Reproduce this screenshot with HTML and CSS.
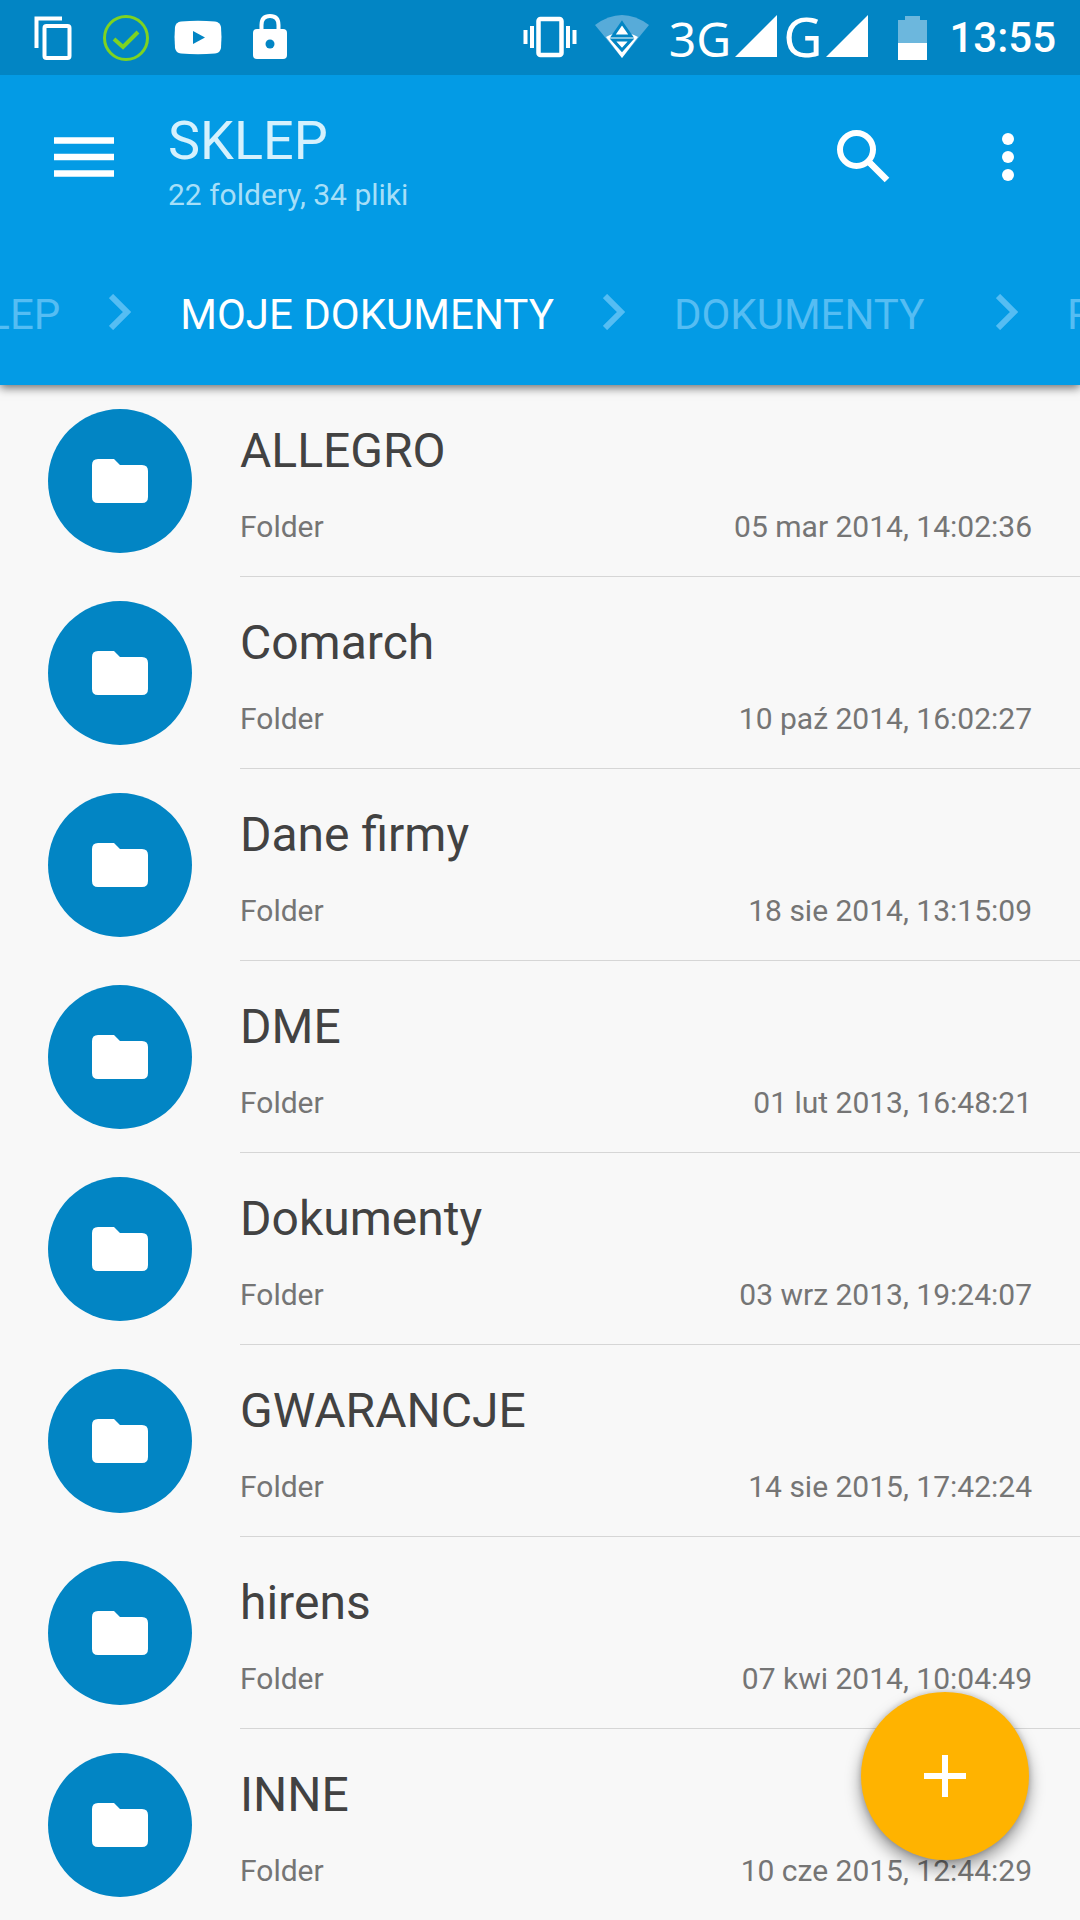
FILE: index.html
```html
<!DOCTYPE html>
<html lang="pl">
<head>
<meta charset="utf-8">
<meta name="viewport" content="width=device-width, initial-scale=1">
<title>SKLEP</title>
<link rel="stylesheet" href="styles.css">
</head>
<body>
<svg width="0" height="0" class="sprite" aria-hidden="true">
  <symbol id="folder" viewBox="0 0 56 44"><path d="M6 0H22L28 6H50Q56 6 56 12V38Q56 44 50 44H6Q0 44 0 38V6Q0 0 6 0Z" fill="#fff"/></symbol>
  <symbol id="chevron" viewBox="0 0 22 36"><path d="M2 2L18 18L2 34" fill="none" stroke="currentColor" stroke-width="6"/></symbol>
</svg>
<header class="top">
  <div class="status">
    <div class="status-left">
      <svg width="48" height="48" viewBox="0 0 48 48"><path d="M6.500 34V4.500H32" fill="none" stroke="#fff" stroke-width="4"/><rect x="14.500" y="12" width="25" height="32" rx="2" fill="none" stroke="#fff" stroke-width="4"/></svg>
      <svg width="48" height="48" viewBox="0 0 48 48"><circle cx="24" cy="24" r="21.500" fill="none" stroke="#7ed321" stroke-width="3"/><path d="M12 25L21 33L36 18" fill="none" stroke="#7ed321" stroke-width="4"/></svg>
      <svg width="48" height="48" viewBox="0 0 48 48"><path d="M7 7.500Q24 6 41 7.500Q46 8 47 13Q48 23 47 34Q46 39 41 39.500Q24 41 7 39.500Q2 39 1 34Q0 23 1 13Q2 8 7 7.500Z" fill="#fff"/><path d="M19 17V30L31 23.500Z" fill="#0285c4"/></svg>
      <svg width="48" height="48" viewBox="0 0 48 48"><path d="M15.500 16V11Q15.500 2 24 2T32.500 11V16" fill="none" stroke="#fff" stroke-width="4"/><rect x="7" y="15" width="34" height="30" rx="4" fill="#fff"/><circle cx="24" cy="30" r="4.500" fill="#0285c4"/></svg>
    </div>
    <div class="status-right">
      <div class="modes">
        <svg width="54" height="48" viewBox="0 0 54 48"><rect x="15.500" y="5" width="23" height="36" rx="2" fill="none" stroke="#fff" stroke-width="4.500"/><path d="M2.500 16V30M9 12V34M45 12V34M51.500 16V30" stroke="#fff" stroke-width="4"/></svg>
        <svg width="54" height="48" viewBox="0 0 54 48"><path d="M0 11Q27 -9 54 11L27 44Z" fill="#57abd9"/><path d="M11 23Q27 14 43 23L27 44Z" fill="#fff"/><path d="M27 9L36 22H18ZM18 26H36L27 36Z" fill="#fff" stroke="#0285c4" stroke-width="3"/></svg>
      </div>
      <div class="signals">
        <div class="signal"><span class="net net-small">3G</span><svg width="42" height="42" viewBox="0 0 42 42"><path d="M42 0V42H0Z" fill="#fff"/></svg></div>
        <div class="signal"><span class="net">G</span><svg width="42" height="42" viewBox="0 0 42 42"><path d="M42 0V42H0Z" fill="#fff"/></svg></div>
      </div>
      <svg class="battery" width="29" height="44" viewBox="0 0 29 44"><path d="M0 4H7V0H22V4H29V27H0Z" fill="#6cb7dd"/><path d="M0 27H29V44H0Z" fill="#fff"/></svg>
      <time class="clock">13:55</time>
    </div>
  </div>
  <div class="toolbar">
    <button class="icon-button" aria-label="Menu"><svg width="60" height="60" viewBox="0 0 60 60"><path d="M0 13.500H60M0 30H60M0 46.500H60" stroke="#fff" stroke-width="6.500"/></svg></button>
    <div class="heading">
      <h1 class="title">SKLEP</h1>
      <p class="subtitle">22 foldery, 34 pliki</p>
    </div>
    <button class="icon-button" aria-label="Szukaj"><svg width="54" height="54" viewBox="1 1 54 54"><circle cx="20.500" cy="20.500" r="16.500" fill="none" stroke="#fff" stroke-width="6"/><path d="M34 34L51 51" stroke="#fff" stroke-width="6.500"/><path d="M32 32L37 37" stroke="#fff" stroke-width="6"/></svg></button>
    <button class="icon-button" aria-label="Więcej"><svg width="12" height="48" viewBox="0 0 12 48"><circle cx="6" cy="6" r="6" fill="#fff"/><circle cx="6" cy="24" r="6" fill="#fff"/><circle cx="6" cy="42" r="6" fill="#fff"/></svg></button>
  </div>
  <nav class="crumbs" aria-label="Ścieżka">
    <a class="crumb" href="#">SKLEP</a><svg class="chevron"><use href="#chevron"/></svg>
    <a class="crumb current" href="#">MOJE DOKUMENTY</a><svg class="chevron"><use href="#chevron"/></svg>
    <a class="crumb" href="#">DOKUMENTY</a><svg class="chevron"><use href="#chevron"/></svg>
    <a class="crumb" href="#">P</a>
  </nav>
</header>
<main>
  <ul class="files">
    <li class="file"><span class="avatar"><svg class="folder"><use href="#folder"/></svg></span><div class="info"><h2 class="name">ALLEGRO</h2><p class="meta"><span>Folder</span><time>05 mar 2014, 14:02:36</time></p></div></li>
    <li class="file"><span class="avatar"><svg class="folder"><use href="#folder"/></svg></span><div class="info"><h2 class="name">Comarch</h2><p class="meta"><span>Folder</span><time>10 paź 2014, 16:02:27</time></p></div></li>
    <li class="file"><span class="avatar"><svg class="folder"><use href="#folder"/></svg></span><div class="info"><h2 class="name">Dane firmy</h2><p class="meta"><span>Folder</span><time>18 sie 2014, 13:15:09</time></p></div></li>
    <li class="file"><span class="avatar"><svg class="folder"><use href="#folder"/></svg></span><div class="info"><h2 class="name">DME</h2><p class="meta"><span>Folder</span><time>01 lut 2013, 16:48:21</time></p></div></li>
    <li class="file"><span class="avatar"><svg class="folder"><use href="#folder"/></svg></span><div class="info"><h2 class="name">Dokumenty</h2><p class="meta"><span>Folder</span><time>03 wrz 2013, 19:24:07</time></p></div></li>
    <li class="file"><span class="avatar"><svg class="folder"><use href="#folder"/></svg></span><div class="info"><h2 class="name">GWARANCJE</h2><p class="meta"><span>Folder</span><time>14 sie 2015, 17:42:24</time></p></div></li>
    <li class="file"><span class="avatar"><svg class="folder"><use href="#folder"/></svg></span><div class="info"><h2 class="name">hirens</h2><p class="meta"><span>Folder</span><time>07 kwi 2014, 10:04:49</time></p></div></li>
    <li class="file"><span class="avatar"><svg class="folder"><use href="#folder"/></svg></span><div class="info"><h2 class="name">INNE</h2><p class="meta"><span>Folder</span><time>10 cze 2015, 12:44:29</time></p></div></li>
  </ul>
</main>
<button class="fab" aria-label="Dodaj"><svg width="42" height="42" viewBox="0 0 42 42"><path d="M0 21H42M21 0V42" stroke="#fff" stroke-width="6"/></svg></button>
</body>
</html>
```
FILE: styles.css
```css
* { box-sizing: border-box; margin: 0; padding: 0; }
body { background: #f8f8f8; color: #424242; font-family: Roboto, sans-serif; }
svg { display: block; flex: none; }
button { border: 0; background: none; cursor: pointer; }
.sprite { position: absolute; }

.top {
  position: sticky;
  top: 0;
  z-index: 1;
  background: #039be5;
  color: #fff;
  box-shadow: 0 3px 9px rgba(0, 0, 0, 0.55);
}

.status {
  display: flex;
  justify-content: space-between;
  align-items: center;
  height: 75px;
  padding: 0 24px 0 30px;
  background: #0285c4;
}
.status-left { display: flex; gap: 24px; }
.status-right { display: flex; align-items: center; gap: 20px; }
.modes { display: flex; gap: 18px; }
.signals { display: flex; align-items: baseline; gap: 6px; }
.signal { display: flex; align-items: baseline; gap: 4px; }
.net { font-family: "Noto Sans", sans-serif; font-size: 54px; line-height: 72px; }
.net-small { font-size: 48px; }
.battery { margin: 0 2px 0 10px; }
.clock { font-size: 42px; line-height: 48px; font-weight: 500; }

.toolbar {
  display: flex;
  align-items: center;
  height: 164px;
  padding-left: 12px;
}
.icon-button {
  display: flex;
  align-items: center;
  justify-content: center;
  width: 144px;
  height: 96px;
}
.heading { flex: 1; padding: 9px 12px 0; }
.title { font-size: 54px; line-height: 64px; font-weight: 400; color: #d5f1fd; }
.subtitle { margin-top: 2px; font-size: 30px; line-height: 40px; color: #a6dff8; }

.crumbs {
  display: flex;
  align-items: center;
  gap: 49px;
  height: 146px;
  margin-left: -64px;
  overflow: hidden;
  color: #55bdf3;
}
.crumb {
  flex: none;
  padding-top: 6px;
  font-size: 42px;
  line-height: 48px;
  color: inherit;
  text-decoration: none;
}
.crumb:nth-of-type(n + 2) { min-width: 273px; }
.current { color: #fff; }
.chevron { width: 22px; height: 36px; }

.files { list-style: none; }
.file { display: flex; padding-left: 48px; gap: 48px; }
.avatar {
  display: flex;
  flex: none;
  align-items: center;
  justify-content: center;
  width: 144px;
  height: 144px;
  margin-top: 24px;
  border-radius: 50%;
  background: #0285c4;
}
.folder { width: 56px; height: 44px; }
.info {
  flex: 1;
  padding: 36px 48px 29px 0;
  border-bottom: 1px solid #d6d6d6;
}
.file:last-child .info { border-bottom: 0; }
.name { font-size: 48px; line-height: 60px; font-weight: 400; }
.meta {
  display: flex;
  justify-content: space-between;
  margin-top: 26px;
  font-size: 30px;
  line-height: 40px;
  color: #757575;
}

.fab {
  position: fixed;
  right: 51px;
  bottom: 60px;
  z-index: 2;
  display: flex;
  align-items: center;
  justify-content: center;
  width: 168px;
  height: 168px;
  border-radius: 50%;
  background: #ffb300;
  box-shadow: 0 8px 16px rgba(0, 0, 0, 0.4), 0 0 6px rgba(0, 0, 0, 0.2);
}
```
